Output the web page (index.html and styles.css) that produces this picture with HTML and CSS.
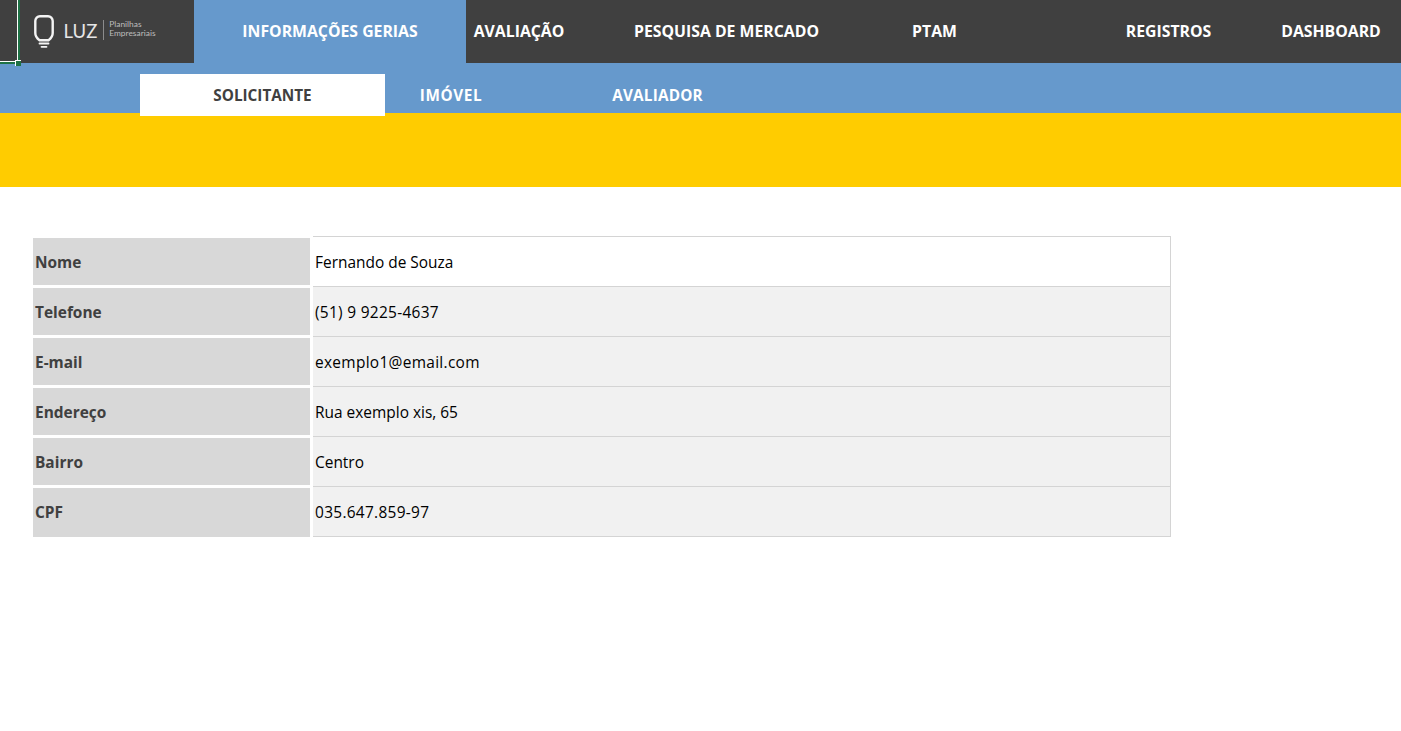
FILE: index.html
```html
<!DOCTYPE html>
<html lang="pt-BR">
<head>
<meta charset="utf-8">
<title>LUZ - Informações Gerais</title>
<link rel="stylesheet" href="styles.css">
</head>
<body>
<header class="topbar">
  <div class="brand">
    <svg class="bulb" width="20" height="34" viewBox="0 0 20 34" fill="none" stroke="#f4f4f4" stroke-linecap="round">
      <path d="M6 1.300h8a4.700 4.700 0 0 1 4.700 4.700v12c0 3.800-2.200 5.800-4.200 7.200H5.500c-2-1.400-4.200-3.400-4.200-7.200V6A4.700 4.700 0 0 1 6 1.300z" stroke-width="2.400"/>
      <path d="M5.500 28.500h9" stroke-width="1.800"/>
      <path d="M7.500 31.800h5" stroke-width="1.800"/>
    </svg>
    <span class="brand-name">LUZ</span>
    <span class="brand-sub">Planilhas<br>Empresariais</span>
  </div>
  <nav class="mainnav">
    <a class="navitem active w-info">INFORMAÇÕES GERIAS</a>
    <a class="navitem w-aval">AVALIAÇÃO</a>
    <a class="navitem w-pesq">PESQUISA DE MERCADO</a>
    <a class="navitem w-ptam">PTAM</a>
    <a class="navitem w-reg">REGISTROS</a>
    <a class="navitem w-dash">DASHBOARD</a>
  </nav>
  <span class="sel-v"></span>
  <span class="sel-h"></span>
  <span class="sel-handle"></span>
</header>
<div class="subbar">
  <a class="tab current">SOLICITANTE</a>
  <a class="tab t-imovel">IMÓVEL</a>
  <a class="tab t-aval">AVALIADOR</a>
</div>
<div class="band"></div>
<main class="sheet">
  <div class="row"><div class="label">Nome</div><div class="value first">Fernando de Souza</div></div>
  <div class="row"><div class="label">Telefone</div><div class="value wide">(51) 9 9225-4637</div></div>
  <div class="row"><div class="label">E-mail</div><div class="value wide">exemplo1@email.com</div></div>
  <div class="row"><div class="label">Endereço</div><div class="value">Rua exemplo xis, 65</div></div>
  <div class="row"><div class="label">Bairro</div><div class="value">Centro</div></div>
  <div class="row"><div class="label">CPF</div><div class="value wide">035.647.859-97</div></div>
</main>
</body>
</html>
```
FILE: styles.css
```css
* { box-sizing: border-box; }
html, body { margin: 0; height: 100%; overflow: hidden; background: #fff; }
body { font-family: "Open Sans", "Liberation Sans", sans-serif; font-size: 15.45px; color: #000; }

.topbar { position: relative; display: flex; height: 63px; background: #404040; }
.brand { width: 194px; flex: none; display: flex; align-items: flex-start; padding: 15px 0 0 34px; }
.bulb { flex: none; }
.brand-name { margin: 6px 0 0 9.500px; font-family: "Lato", sans-serif; font-weight: 400; font-size: 18.5px; color: #e6e6e6; line-height: 20px; }
.brand-sub { margin: 5px 0 0 6px; padding-left: 5px; border-left: 1px solid #8c8c8c; font-family: "Lato", sans-serif; font-size: 8.4px; line-height: 8.500px; color: #bdbdbd; height: 20px; white-space: nowrap; }

.mainnav { display: flex; flex: 1; }
.navitem { display: flex; align-items: center; justify-content: center; height: 61px; color: #fff; font-weight: 700; font-size: 15.8px; white-space: nowrap; }
.navitem.active { height: 63px; padding-bottom: 2px; background: #6699cc; }
.w-info { width: 272px; }
.w-aval { width: 106px; }
.w-pesq { width: 269px; margin: 0 20px; }
.w-ptam { width: 107px; }
.w-reg { width: 185px; margin-left: 88px; }
.w-dash { width: 140px; }

.sel-v { position: absolute; left: 17px; top: 0; width: 3px; height: 63px; background: #1f7246; border-left: 1px solid #fff; }
.sel-h { position: absolute; left: 0; top: 61px; width: 18px; height: 3px; background: #1f7246; border-top: 1px solid #fff; }
.sel-handle { position: absolute; left: 15px; top: 60px; width: 6px; height: 6px; background: #1f7246; border-top: 1px solid #fff; border-left: 1px solid #fff; }

.subbar { display: flex; height: 50px; background: #6699cc; padding: 11px 0 0 140px; }
.tab { display: flex; align-items: center; justify-content: center; height: 42px; color: #fff; font-weight: 700; font-size: 15.3px; }
.tab.current { width: 245px; background: #fff; color: #404040; }
.t-imovel { width: 132px; letter-spacing: .6px; }
.t-aval { width: 281px; letter-spacing: .2px; }

.band { height: 74px; background: #ffcc00; }

.sheet { padding: 50px 0 0 33px; width: 1171px; }
.row { display: flex; height: 50px; gap: 3px; }
.label { width: 277px; height: 47px; margin-top: 1px; display: flex; align-items: center; padding-left: 2px; background: #d8d8d8; color: #404040; font-weight: 700; }
.value { width: 858px; height: 50px; display: flex; align-items: center; padding-left: 2px; background: #f1f1f1; border-right: 1px solid #d4d4d4; border-bottom: 1px solid #d4d4d4; }
.value.wide { letter-spacing: .3px; }
.value.first { height: 51px; margin-top: -1px; background: #fff; border-top: 1px solid #d4d4d4; }
.row:last-child .label { height: 49px; padding-bottom: 1px; }
```
